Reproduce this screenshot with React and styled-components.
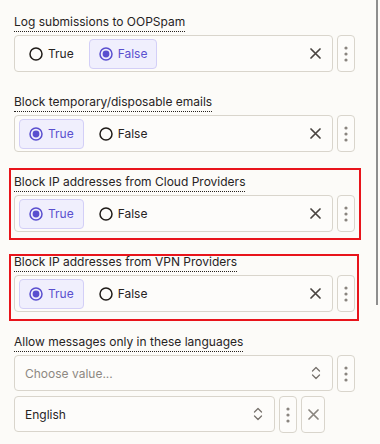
import styled, { createGlobalStyle } from "styled-components";

const GlobalStyle = createGlobalStyle`
    html, body {
        margin: 0;
        padding: 0;
        background: #fcfbf8;
        font-family: Inter, "Noto Sans", sans-serif;
        color: #27231f;
    }
`;

function Radio({ checked }) {
    return (
        <svg width="14" height="14" viewBox="0 0 14 14">
            <circle cx="7" cy="7" r="6" fill="none" stroke={checked ? "#5a4fcf" : "#1f1b18"} strokeWidth="1.5" />
            {checked && <circle cx="7" cy="7" r="3.4" fill="#5a4fcf" />}
        </svg>
    );
}

function Cross({ color = "#4a4541" }) {
    return (
        <svg width="11" height="11" viewBox="0 0 11 11">
            <path d="M1 1 L10 10 M10 1 L1 10" stroke={color} strokeWidth="1.7" strokeLinecap="round" />
        </svg>
    );
}

function Chevrons() {
    return (
        <svg width="10" height="14" viewBox="0 0 10 14">
            <path d="M1.5 5 L5 1.5 L8.5 5 M1.5 9 L5 12.5 L8.5 9" fill="none" stroke="#77726c" strokeWidth="1.3" strokeLinecap="round" strokeLinejoin="round" />
        </svg>
    );
}

function Kebab() {
    return (
        <svg width="4" height="16" viewBox="0 0 4 16">
            <circle cx="2" cy="2" r="1.6" fill="#8a857f" />
            <circle cx="2" cy="8" r="1.6" fill="#8a857f" />
            <circle cx="2" cy="14" r="1.6" fill="#8a857f" />
        </svg>
    );
}

function BooleanField({ label, value, highlight }) {
    const field = (
        <Field>
            <LabelRow>
                <Label>{label}</Label>
            </LabelRow>
            <Row>
                <Box>
                    <Options>
                        <Option $active={value === true}>
                            <Radio checked={value === true} />
                            True
                        </Option>
                        <Option $active={value === false}>
                            <Radio checked={value === false} />
                            False
                        </Option>
                    </Options>
                    <ClearIcon>
                        <Cross />
                    </ClearIcon>
                </Box>
                <MenuButton>
                    <Kebab />
                </MenuButton>
            </Row>
        </Field>
    );

    if (!highlight) return field;
    return <Highlight {...highlight}>{field}</Highlight>;
}

function App() {
    return (
        <>
            <GlobalStyle />
            <Page>
                <BooleanField label="Log submissions to OOPSpam" value={false} />
                <BooleanField label="Block temporary/disposable emails" value={true} />
                <BooleanField
                    label="Block IP addresses from Cloud Providers"
                    value={true}
                    highlight={{ $top: -5, $right: -6, $left: -5, $bottom: -8 }}
                />
                <BooleanField
                    label="Block IP addresses from VPN Providers"
                    value={true}
                    highlight={{ $top: 1, $right: -4, $left: -5, $bottom: -9 }}
                />

                <Field>
                    <LabelRow>
                        <Label>Allow messages only in these languages</Label>
                    </LabelRow>
                    <Row>
                        <Select>
                            <Placeholder>Choose value...</Placeholder>
                            <Chevrons />
                        </Select>
                        <MenuButton>
                            <Kebab />
                        </MenuButton>
                    </Row>
                    <Row $narrow>
                        <Select>
                            <Value>English</Value>
                            <Chevrons />
                        </Select>
                        <MenuButton>
                            <Kebab />
                        </MenuButton>
                        <RemoveButton>
                            <Cross color="#8a857f" />
                        </RemoveButton>
                    </Row>
                </Field>
            </Page>
            <ScrollThumb />
        </>
    );
}

const Page = styled.div`
    padding: 13px 25px 0 14px;
`;

const Field = styled.div`
    display: flex;
    flex-direction: column;
    gap: 4px;
    margin-bottom: 21px;
`;

const Highlight = styled.div`
    position: relative;

    &::after {
        content: "";
        position: absolute;
        top: ${(p) => p.$top}px;
        left: ${(p) => p.$left}px;
        right: ${(p) => p.$right}px;
        bottom: ${(p) => p.$bottom}px;
        border: 2px solid #e8141b;
        pointer-events: none;
    }
`;

const LabelRow = styled.div`
    display: flex;
    margin-bottom: -1px;
`;

const Label = styled.span`
    font-size: 12px;
    line-height: 18px;
    color: #27231f;
    border-bottom: 1px dotted #27231f;
`;

const Row = styled.div`
    display: flex;
    gap: 4px;
    width: ${(p) => (p.$narrow ? "311px" : "auto")};
`;

const Box = styled.div`
    flex: 1;
    display: flex;
    align-items: center;
    justify-content: space-between;
    height: 37px;
    box-sizing: border-box;
    padding: 0 11px 0 4px;
    border: 1px solid #d9d5cc;
    border-radius: 4px;
    background: #fdfcfa;
`;

const Options = styled.div`
    display: flex;
    gap: 5px;
`;

const Option = styled.div`
    display: flex;
    align-items: center;
    gap: 5px;
    height: 30px;
    box-sizing: border-box;
    padding: 0 9px;
    font-size: 12px;
    border-radius: 4px;
    border: 1px solid ${(p) => (p.$active ? "#d3cff7" : "transparent")};
    background: ${(p) => (p.$active ? "#f0effd" : "transparent")};
    color: ${(p) => (p.$active ? "#5a4fcf" : "#27231f")};
`;

const ClearIcon = styled.span`
    display: flex;
    align-items: center;
`;

const MenuButton = styled.div`
    width: 18px;
    height: 37px;
    box-sizing: border-box;
    display: flex;
    align-items: center;
    justify-content: center;
    border: 1px solid #d9d5cc;
    border-radius: 4px;
    background: #fdfcfa;
`;

const RemoveButton = styled(MenuButton)`
    width: 24px;
`;

const Select = styled.div`
    flex: 1;
    display: flex;
    align-items: center;
    justify-content: space-between;
    height: 36px;
    box-sizing: border-box;
    padding: 0 11px 0 10px;
    border: 1px solid #d9d5cc;
    border-radius: 4px;
    background: #fdfcfa;
    font-size: 12px;
`;

const Placeholder = styled.span`
    color: #8d8882;
`;

const Value = styled.span`
    color: #27231f;
`;

const ScrollThumb = styled.div`
    position: fixed;
    top: 0;
    right: 2px;
    width: 2px;
    height: 305px;
    background: #8e8e8e;
`;

export default App;
